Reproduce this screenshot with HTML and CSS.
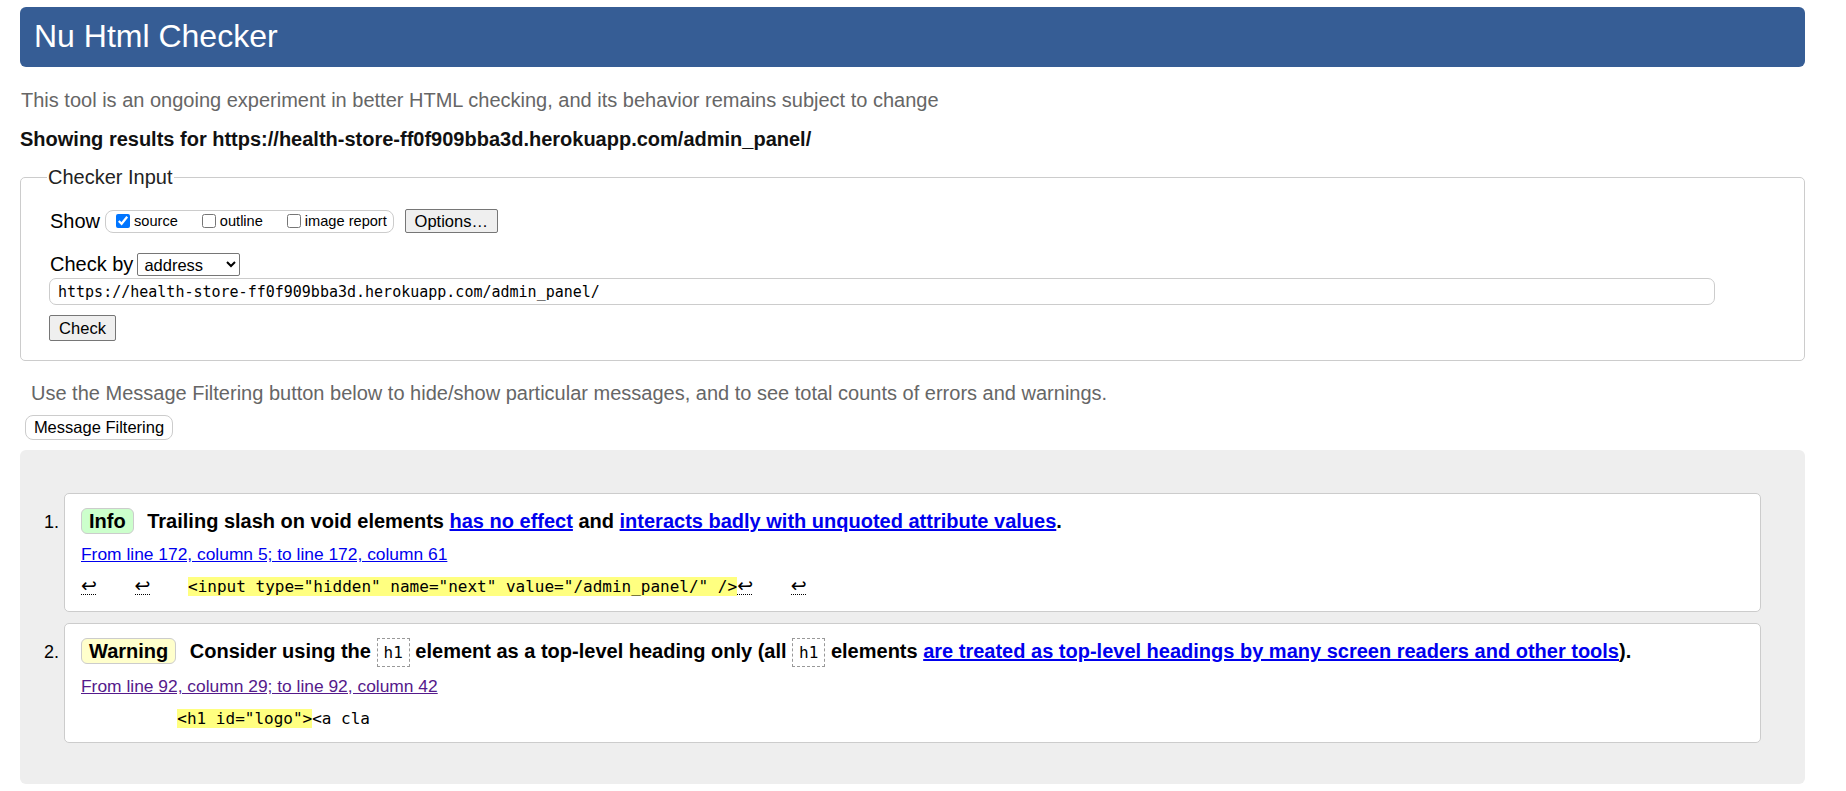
FILE: index.html
```html
<!DOCTYPE html>
<html lang="en">
<head>
<meta charset="utf-8">
<title>Nu Html Checker</title>
<link rel="stylesheet" href="styles.css">
</head>
<body>
<h1 class="title">Nu Html Checker</h1>
<p class="intro">This tool is an ongoing experiment in better HTML checking, and its behavior remains subject to change</p>
<p class="results-for">Showing results for https://health-store-ff0f909bba3d.herokuapp.com/admin_panel/</p>

<fieldset class="checker">
  <legend class="checker-legend">Checker Input</legend>
  <div class="row row-show">
    <span class="label">Show</span>
    <span class="show-group">
      <label class="opt"><input type="checkbox" checked> source</label>
      <label class="opt"><input type="checkbox"> outline</label>
      <label class="opt"><input type="checkbox"> image report</label>
    </span>
    <button class="btn btn-options" type="button">Options…</button>
  </div>
  <div class="row row-checkby">
    <span class="label">Check by</span>
    <select class="select-by"><option>address</option></select>
  </div>
  <input class="url-input" type="text" value="https://health-store-ff0f909bba3d.herokuapp.com/admin_panel/">
  <div class="row row-check">
    <button class="btn btn-check" type="button">Check</button>
  </div>
</fieldset>

<p class="filter-note">Use the Message Filtering button below to hide/show particular messages, and to see total counts of errors and warnings.</p>
<button class="btn-filter" type="button">Message Filtering</button>

<div class="results">
  <ol class="messages">
    <li class="msg">
      <p class="msg-text"><strong class="badge badge-info">Info</strong> <span>Trailing slash on void elements <a href="#" class="link">has no effect</a> and <a href="#" class="link">interacts badly with unquoted attribute values</a>.</span></p>
      <p class="location"><a href="#" class="link-loc">From line 172, column 5; to line 172, column 61</a></p>
      <p class="extract"><code><span class="lf">↩</span>    <span class="lf">↩</span>    <mark class="hl">&lt;input type="hidden" name="next" value="/admin_panel/" /&gt;</mark><span class="lf">↩</span>    <span class="lf">↩</span></code></p>
    </li>
    <li class="msg">
      <p class="msg-text"><strong class="badge badge-warning">Warning</strong> <span>Consider using the <code class="inline-code">h1</code> element as a top-level heading only (all <code class="inline-code">h1</code> elements <a href="#" class="link">are treated as top-level headings by many screen readers and other tools</a>).</span></p>
      <p class="location"><a href="#" class="link-loc visited">From line 92, column 29; to line 92, column 42</a></p>
      <p class="extract"><code>          <mark class="hl">&lt;h1 id="logo"&gt;</mark>&lt;a cla</code></p>
    </li>
  </ol>
</div>
</body>
</html>
```

FILE: styles.css
```css
html {
  background: #fff;
}
body {
  margin: 0 41px 0 20px;
  font-family: "Liberation Sans", Arial, sans-serif;
  font-size: 20px;
  color: #000;
}
.title {
  margin: 7px 0 0;
  height: 60px;
  box-sizing: border-box;
  padding: 11px 14px 0;
  background: #365d95;
  color: #fff;
  font-size: 32px;
  font-weight: normal;
  line-height: 37px;
  border-radius: 6px;
}
.intro {
  margin: 22px 0 0 1px;
  line-height: 23px;
  color: #666;
}
.results-for {
  margin: 16px 0 0;
  line-height: 23px;
  font-weight: bold;
  color: #111;
}
.checker {
  margin: 15px 0 0;
  padding: 20px 28px 19px;
  border: 1px solid #ccc;
  border-radius: 5px;
  min-width: 0;
}
.checker-legend {
  padding: 0 1px;
  margin-left: -2px;
  line-height: 23px;
  color: #222;
}
.row {
  display: flex;
  align-items: center;
}
.row-show {
  height: 24px;
}
.label {
  color: #000;
  margin-right: 5px;
  margin-left: 1px;
}
.show-group {
  display: inline-flex;
  align-items: center;
  height: 21px;
  padding: 0 6px 0 8px;
  border: 1px solid #ccc;
  border-radius: 8px;
  font-size: 14.6px;
}
.opt {
  display: inline-flex;
  align-items: center;
  margin-right: 22px;
}
.opt:last-child {
  margin-right: 0;
}
.opt input {
  margin: 0 4px 0 2px;
  width: 14px;
  height: 14px;
}
.btn {
  font-family: "Liberation Sans", Arial, sans-serif;
  font-size: 16.5px;
  background: #efefef;
  border: 1px solid #767676;
  border-radius: 2px;
  color: #000;
  padding: 0;
  box-sizing: border-box;
}
.btn-options {
  margin-left: 11px;
  width: 93px;
  height: 24px;
}
.row-checkby {
  margin-top: 20px;
  height: 23px;
}
.row-checkby .label {
  margin-right: 4px;
}
.select-by {
  width: 103px;
  height: 23px;
  font-family: "Liberation Sans", Arial, sans-serif;
  font-size: 16.5px;
  border: 1px solid #767676;
  border-radius: 2px;
  background: #fff;
  color: #000;
  padding: 0 2px;
}
.url-input {
  display: block;
  box-sizing: border-box;
  width: 1666px;
  max-width: 100%;
  height: 27px;
  margin-top: 2px;
  padding: 0 8px;
  border: 1px solid #ccc;
  border-radius: 7px;
  font-family: "DejaVu Sans Mono", "Liberation Mono", monospace;
  font-size: 15px;
  color: #000;
}
.row-check {
  margin-top: 10px;
}
.btn-check {
  width: 67px;
  height: 26px;
}
.filter-note {
  margin: 21px 0 0 11px;
  line-height: 23px;
  color: #666;
}
.btn-filter {
  display: block;
  margin: 10px 0 0 5px;
  width: 148px;
  height: 25px;
  padding: 0;
  background: #fff;
  border: 1px solid #ccc;
  border-radius: 8px;
  font-family: "Liberation Sans", Arial, sans-serif;
  font-size: 16.5px;
  color: #000;
}
.results {
  margin-top: 10px;
  background: #eee;
  border-radius: 6px;
  padding: 43px 44px 41px 44px;
}
.messages {
  margin: 0;
  padding: 0;
}
.msg {
  background: #fff;
  border: 1px solid #ccc;
  border-radius: 5px;
  padding: 12px 16px 13px;
  font-size: 18px;
}
.msg + .msg {
  margin-top: 11px;
  padding-bottom: 12px;
}
.msg::marker {
  font-size: 18px;
}
.msg p {
  margin: 0;
}
.msg-text {
  font-size: 20px;
  font-weight: bold;
  line-height: 30px;
}
.badge {
  display: inline-block;
  line-height: 24px;
  padding: 0 7px;
  border: 1px solid #ccc;
  border-radius: 6px;
  margin-right: 8px;
}
.badge-info {
  background: #ccffcc;
}
.badge-warning {
  background: #ffffcc;
}
.link {
  color: #0000ee;
}
.inline-code {
  font-family: "DejaVu Sans Mono", "Liberation Mono", monospace;
  font-size: 16px;
  font-weight: normal;
  padding: 4px 6px;
  border: 1px dashed #999;
}
.location {
  margin-top: 7px !important;
  font-size: 17.4px;
  line-height: 22px;
}
.link-loc {
  color: #0000ee;
}
.link-loc.visited {
  color: #551a8b;
}
.extract {
  margin-top: 10px !important;
  line-height: 22px;
  white-space: pre;
}
.extract code {
  font-family: "DejaVu Sans Mono", "Liberation Mono", monospace;
  font-size: 16px;
  color: #000;
}
.lf {
  display: inline-block;
  width: 15px;
  font-family: "DejaVu Sans", sans-serif;
  font-size: 19px;
  line-height: 18px;
  border-bottom: 1px dotted #000;
  text-align: center;
}
.hl {
  background: #ffff80;
  color: #000;
}
```
